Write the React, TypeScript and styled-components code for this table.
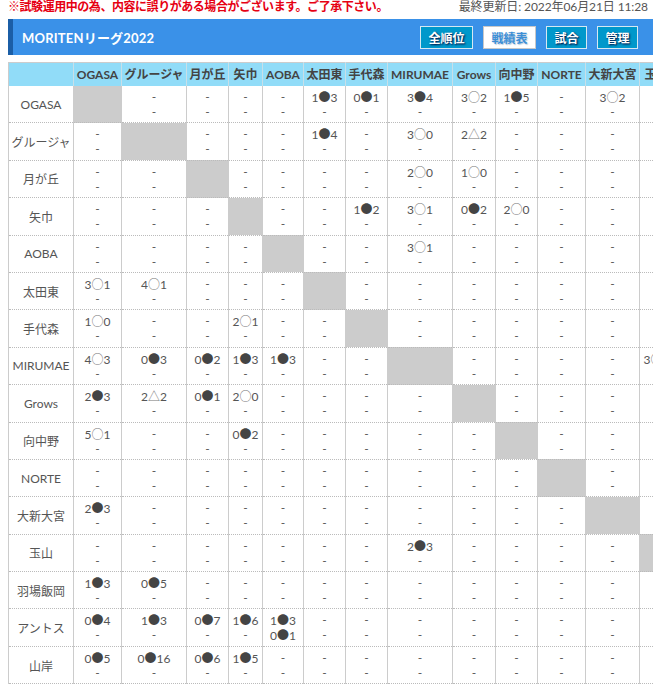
import React from "react";
import styled, { createGlobalStyle } from "styled-components";

const GlobalStyle = createGlobalStyle`
  html, body { margin: 0; padding: 0; background: #fff; }
  body { font-family: Lato, "Noto Sans CJK JP", sans-serif; color: #555; }
`;

const Page = styled.div`
  width: 645px;
  margin-left: 8px;
  overflow: hidden;
`;

const Notice = styled.div`
  display: flex;
  justify-content: space-between;
  align-items: center;
  height: 14px;
  font-size: 12px;
  line-height: 14px;
`;

const Warning = styled.span`
  color: #e60012;
  font-weight: bold;
  letter-spacing: -0.45px;
`;

const Updated = styled.span`
  color: #555;
  margin-right: 5px;
  letter-spacing: -0.1px;
`;

const TitleBar = styled.div`
  margin-top: 5px;
  height: 36px;
  display: flex;
  align-items: center;
  justify-content: space-between;
  background: #3a91e8;
  border-left: 5px solid #1b5ea6;
  padding: 0 15px 0 9px;
`;

const Title = styled.h1`
  margin: 0;
  color: #fff;
  font-size: 13px;
  font-weight: bold;
  letter-spacing: 0.2px;
`;

const Nav = styled.div`
  display: flex;
  gap: 10px;
`;

const NavButton = styled.a<{ $active?: boolean }>`
  display: inline-flex;
  align-items: center;
  justify-content: center;
  height: 23px;
  box-sizing: border-box;
  padding: 0 7.5px;
  font-size: 12px;
  font-weight: bold;
  border: 1px solid ${(p) => (p.$active ? "#c8c8c8" : "#d6e8f2")};
  background: ${(p) => (p.$active ? "#fff" : "#0098cb")};
  color: ${(p) => (p.$active ? "#3d8fd6" : "#fff")};
  text-shadow: ${(p) =>
    p.$active ? "1px 1px 1px #bcd" : "1px 1px 2px #003"};
  cursor: pointer;
`;

const TableWrap = styled.div`
  margin-top: 7px;
  overflow: hidden;
`;

const Table = styled.table`
  border-collapse: collapse;
  table-layout: fixed;
  width: max-content;
  font-size: 12px;
  border-top: 1px solid #ccc;
  border-left: 1px solid #ccc;
`;

const HeadCell = styled.th`
  background: #91dcf8;
  color: #444;
  font-weight: bold;
  padding: 4px 0;
  line-height: 15px;
  height: 15px;
  text-align: center;
  white-space: nowrap;
  border-right: 1px solid #c8dfe8;
`;

const LabelCell = styled.th`
  font-weight: normal;
  color: #555;
  text-align: center;
  vertical-align: middle;
  white-space: nowrap;
  border-right: 1px solid #ccc;
  border-bottom: 1px dotted #bbb;
  padding: 0;
`;

const Cell = styled.td<{ $self?: boolean }>`
  background: ${(p) => (p.$self ? "#cccccc" : "#fff")};
  text-align: center;
  vertical-align: top;
  white-space: nowrap;
  padding: 3px 0 3.4px;
  line-height: 15px;
  color: #555;
  border-right: 1px solid #ccc;
  border-bottom: 1px dotted #bbb;
`;

const Line = styled.div`
  height: 15px;
`;

const Mark = styled.span<{ $filled?: boolean }>`
  font-family: "Noto Sans CJK JP", sans-serif;
  line-height: 15px;
  color: ${(p) => (p.$filled ? "#444" : "#777")};
`;

const teams = [
  "OGASA",
  "グルージャ",
  "月が丘",
  "矢巾",
  "AOBA",
  "太田東",
  "手代森",
  "MIRUMAE",
  "Grows",
  "向中野",
  "NORTE",
  "大新大宮",
  "玉山",
  "羽場飯岡",
  "アントス",
  "山岸",
];

const widths = [65, 48, 65, 42, 34, 41, 42, 42, 65, 43, 42, 48, 54, 34, 54, 54, 34];

// results[row][col] = [line1, line2]
const results: Record<string, Record<string, string[]>> = {
  OGASA: {
    太田東: ["1●3"],
    手代森: ["0●1"],
    MIRUMAE: ["3●4"],
    Grows: ["3○2"],
    向中野: ["1●5"],
    大新大宮: ["3○2"],
  },
  グルージャ: {
    太田東: ["1●4"],
    MIRUMAE: ["3○0"],
    Grows: ["2△2"],
  },
  月が丘: {
    MIRUMAE: ["2○0"],
    Grows: ["1○0"],
  },
  矢巾: {
    手代森: ["1●2"],
    MIRUMAE: ["3○1"],
    Grows: ["0●2"],
    向中野: ["2○0"],
  },
  AOBA: { MIRUMAE: ["3○1"] },
  太田東: { OGASA: ["3○1"], グルージャ: ["4○1"] },
  手代森: { OGASA: ["1○0"], 矢巾: ["2○1"] },
  MIRUMAE: {
    OGASA: ["4○3"],
    グルージャ: ["0●3"],
    月が丘: ["0●2"],
    矢巾: ["1●3"],
    AOBA: ["1●3"],
    玉山: ["3○1"],
  },
  Grows: {
    OGASA: ["2●3"],
    グルージャ: ["2△2"],
    月が丘: ["0●1"],
    矢巾: ["2○0"],
  },
  向中野: { OGASA: ["5○1"], 矢巾: ["0●2"] },
  NORTE: {},
  大新大宮: { OGASA: ["2●3"] },
  玉山: { MIRUMAE: ["2●3"] },
  羽場飯岡: { OGASA: ["1●3"], グルージャ: ["0●5"] },
  アントス: {
    OGASA: ["0●4"],
    グルージャ: ["1●3"],
    月が丘: ["0●7"],
    矢巾: ["1●6"],
    AOBA: ["1●3", "0●1"],
  },
  山岸: {
    OGASA: ["0●5"],
    グルージャ: ["0●16"],
    月が丘: ["0●6"],
    矢巾: ["1●5"],
  },
};

function Score({ text }: { text: string }) {
  const m = text.match(/^(\d+)([●○△])(\d+)$/);
  if (!m) return <>{text}</>;
  return (
    <>
      {m[1]}
      <Mark $filled={m[2] === "●"}>{m[2]}</Mark>
      {m[3]}
    </>
  );
}

export default function App() {
  return (
    <>
      <GlobalStyle />
      <Page>
        <Notice>
          <Warning>※試験運用中の為、内容に誤りがある場合がございます。ご了承下さい。</Warning>
          <Updated>最終更新日: 2022年06月21日 11:28</Updated>
        </Notice>
        <TitleBar>
          <Title>MORITENリーグ2022</Title>
          <Nav>
            <NavButton>全順位</NavButton>
            <NavButton $active>戦績表</NavButton>
            <NavButton>試合</NavButton>
            <NavButton>管理</NavButton>
          </Nav>
        </TitleBar>
        <TableWrap>
          <Table>
            <colgroup>
              {widths.map((w, i) => (
                <col key={i} style={{ width: w }} />
              ))}
            </colgroup>
            <thead>
              <tr>
                <HeadCell />
                {teams.map((t) => (
                  <HeadCell key={t}>{t}</HeadCell>
                ))}
              </tr>
            </thead>
            <tbody>
              {teams.map((row) => (
                <tr key={row}>
                  <LabelCell>{row}</LabelCell>
                  {teams.map((col) => {
                    if (row === col) return <Cell key={col} $self />;
                    const r = results[row]?.[col] ?? [];
                    const l1 = r[0] ?? "-";
                    const l2 = r[1] ?? "-";
                    return (
                      <Cell key={col}>
                        <Line>
                          <Score text={l1} />
                        </Line>
                        <Line>
                          <Score text={l2} />
                        </Line>
                      </Cell>
                    );
                  })}
                </tr>
              ))}
            </tbody>
          </Table>
        </TableWrap>
      </Page>
    </>
  );
}
